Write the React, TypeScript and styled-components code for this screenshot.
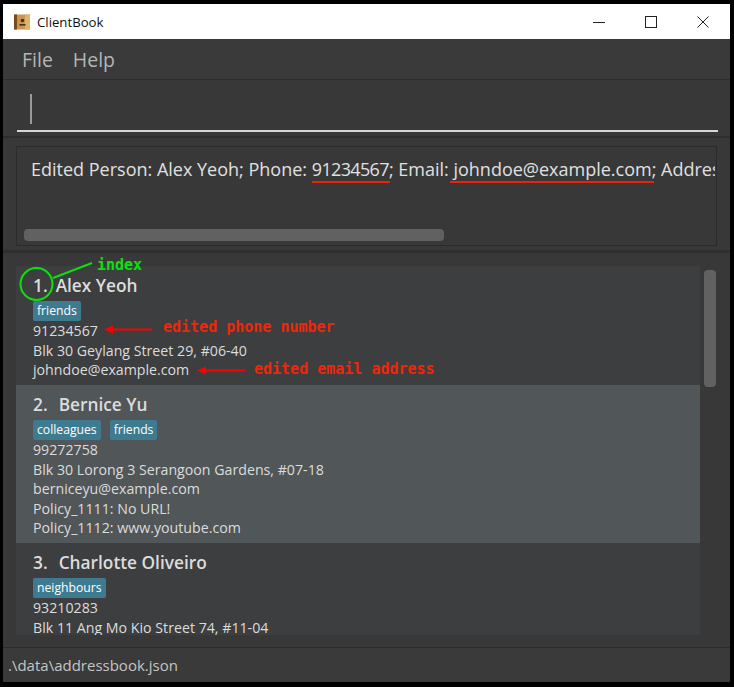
import { createGlobalStyle, styled } from "styled-components";

const GlobalStyle = createGlobalStyle`
  html, body {
    margin: 0;
    padding: 0;
    background: #000;
  }
  * {
    box-sizing: border-box;
  }
`;

const persons = [
  {
    index: 1,
    name: "Alex Yeoh",
    tags: ["friends"],
    lines: ["91234567", "Blk 30 Geylang Street 29, #06-40", "johndoe@example.com"],
  },
  {
    index: 2,
    name: "Bernice Yu",
    tags: ["colleagues", "friends"],
    lines: [
      "99272758",
      "Blk 30 Lorong 3 Serangoon Gardens, #07-18",
      "berniceyu@example.com",
      "Policy_1111: No URL!",
      "Policy_1112: www.youtube.com",
    ],
  },
  {
    index: 3,
    name: "Charlotte Oliveiro",
    tags: ["neighbours"],
    lines: ["93210283", "Blk 11 Ang Mo Kio Street 74, #11-04"],
  },
];

const AppIcon = () => (
  <svg width="16" height="16" viewBox="0 0 16 16">
    <rect x="0" y="0.5" width="16" height="15" fill="#c9954f" />
    <rect x="0" y="0.5" width="3" height="15" fill="#7a4a1e" />
    <rect x="11" y="0.5" width="5" height="15" fill="#e0b36c" />
    <circle cx="8.5" cy="6.5" r="1.8" fill="#4a2f14" />
    <rect x="5.5" y="10" width="6" height="1.6" fill="#4a2f14" />
  </svg>
);

const Annotations = () => (
  <Overlay width="734" height="687" viewBox="0 0 734 687">
    <circle cx="36.5" cy="284" r="16" fill="none" stroke="#0de00d" strokeWidth="2" />
    <line x1="53" y1="278" x2="92" y2="263" stroke="#0de00d" strokeWidth="2" />
    <line x1="112" y1="329.5" x2="152" y2="329.5" stroke="#f00" strokeWidth="2" />
    <polygon points="104,329.5 113,325.5 113,333.5" fill="#f00" />
    <line x1="205" y1="370.5" x2="245" y2="370.5" stroke="#f00" strokeWidth="2" />
    <polygon points="197,370.5 206,366.5 206,374.5" fill="#f00" />
  </Overlay>
);

const App = () => {
  return (
    <Page>
      <GlobalStyle />
      <Window>
        <TitleBar>
          <AppIcon />
          <TitleText>ClientBook</TitleText>
          <WindowButtons>
            <WindowButton>
              <svg width="12" height="12" viewBox="0 0 12 12">
                <line x1="0" y1="6.5" x2="12" y2="6.5" stroke="#222" />
              </svg>
            </WindowButton>
            <WindowButton>
              <svg width="12" height="12" viewBox="0 0 12 12">
                <rect x="0.5" y="0.5" width="11" height="11" fill="none" stroke="#222" />
              </svg>
            </WindowButton>
            <WindowButton>
              <svg width="12" height="12" viewBox="0 0 12 12">
                <path d="M0.5 0.5 L11.5 11.5 M11.5 0.5 L0.5 11.5" stroke="#222" />
              </svg>
            </WindowButton>
          </WindowButtons>
        </TitleBar>

        <MenuBar>
          <MenuItem>File</MenuItem>
          <MenuItem>Help</MenuItem>
        </MenuBar>

        <CommandBar>
          <CommandInput>
            <Caret />
          </CommandInput>
        </CommandBar>

        <ResultPane>
          <ResultBox>
            <ResultText>
              Edited Person: Alex Yeoh; Phone: <PhoneEdit>91234567</PhoneEdit>; Email:{" "}
              <EmailEdit>johndoe@example.com</EmailEdit>; Address: Blk 30 Geylang Street 29, #06-40
            </ResultText>
            <HScrollThumb />
          </ResultBox>
        </ResultPane>

        <ListPane>
          <CardList>
            {persons.map((person) => (
              <Card key={person.index} $alt={person.index % 2 === 0}>
                <CardName>
                  <CardIndex $gap={person.index === 1 ? 8 : 11}>{person.index}.</CardIndex>
                  {person.name}
                </CardName>
                <Tags>
                  {person.tags.map((tag) => (
                    <Tag key={tag}>{tag}</Tag>
                  ))}
                </Tags>
                {person.lines.map((line) => (
                  <CardLine key={line}>{line}</CardLine>
                ))}
              </Card>
            ))}
          </CardList>
          <VScrollThumb />
        </ListPane>

        <StatusBar>.\data\addressbook.json</StatusBar>
      </Window>
      <Annotations />
      <IndexNote>index</IndexNote>
      <PhoneNote>edited phone number</PhoneNote>
      <EmailNote>edited email address</EmailNote>
    </Page>
  );
};

export default App;

const Page = styled.div`
  position: relative;
  width: 734px;
  height: 687px;
  padding: 4px 4px 5px 3px;
  background: #000;
  overflow: hidden;
  font-family: "Open Sans", "Noto Sans", sans-serif;
`;

const Window = styled.div`
  width: 100%;
  height: 100%;
  display: flex;
  flex-direction: column;
  background: #383838;
`;

const TitleBar = styled.div`
  height: 35px;
  flex-shrink: 0;
  display: flex;
  align-items: center;
  padding: 0 1px 0 11px;
  background: #fff;
`;

const TitleText = styled.div`
  margin-left: 7px;
  font-size: 13.2px;
  color: #111;
`;

const WindowButtons = styled.div`
  margin-left: auto;
  display: flex;
`;

const WindowButton = styled.div`
  width: 52px;
  height: 35px;
  display: flex;
  align-items: center;
  justify-content: center;
`;

const MenuBar = styled.div`
  height: 41px;
  flex-shrink: 0;
  display: flex;
  align-items: center;
  gap: 20px;
  padding: 0 0 0 19px;
  background: #3a3a3a;
  border-bottom: 1px solid #2e2e2e;
`;

const MenuItem = styled.div`
  font-size: 19.5px;
  color: #b5b5b5;
`;

const CommandBar = styled.div`
  height: 58px;
  flex-shrink: 0;
  padding: 12px 12px 4px 14px;
  background: #383838;
  border-bottom: 2px solid #2e2e2e;
`;

const CommandInput = styled.div`
  height: 40px;
  padding: 2px 0 0 13px;
  border-bottom: 2px solid #d6d6d6;
`;

const Caret = styled.div`
  width: 2px;
  height: 30px;
  background: #9a9a9a;
`;

const ResultPane = styled.div`
  height: 115px;
  flex-shrink: 0;
  padding: 8px 13px 0 13px;
  background: #383838;
  border-bottom: 3px solid #2e2e2e;
`;

const ResultBox = styled.div`
  position: relative;
  height: 100px;
  padding: 10px 1px 0 14px;
  border: 1px solid #2b2b2b;
`;

const ResultText = styled.div`
  padding-bottom: 6px;
  font-size: 18px;
  line-height: 24px;
  color: #e0e0e0;
  white-space: nowrap;
  overflow: hidden;
`;

const PhoneEdit = styled.span`
  position: relative;
  letter-spacing: -0.65px;

  &::after {
    content: "";
    position: absolute;
    left: 0;
    right: -1px;
    bottom: -2px;
    height: 2px;
    background: #f0200a;
  }
`;

const EmailEdit = styled.span`
  position: relative;

  &::after {
    content: "";
    position: absolute;
    left: -3px;
    right: -2px;
    bottom: -2px;
    height: 2px;
    background: #f0200a;
  }
`;

const HScrollThumb = styled.div`
  position: absolute;
  left: 7px;
  bottom: 4px;
  width: 420px;
  height: 12px;
  border-radius: 4px;
  background: #616161;
`;

const ListPane = styled.div`
  position: relative;
  height: 394px;
  flex-shrink: 0;
  padding: 13px 0 0 13px;
  background: #383838;
  overflow: hidden;
`;

const CardList = styled.div`
  width: 684px;
  height: 369px;
  background: #3c3e3f;
  overflow: hidden;
`;

const Card = styled.div<{ $alt: boolean }>`
  padding: 7px 0 5.5px 17px;
  background: ${(props) => (props.$alt ? "#515658" : "#3c3e3f")};
`;

const CardName = styled.div`
  display: flex;
  font-size: 17.3px;
  font-weight: 600;
  line-height: 26px;
  color: #dcdcdc;
`;

const CardIndex = styled.span<{ $gap: number }>`
  margin-right: ${(props) => props.$gap}px;
`;

const Tags = styled.div`
  display: flex;
  gap: 9px;
  margin-top: 2px;
`;

const Tag = styled.div`
  height: 20px;
  padding: 0 4px;
  border-radius: 2px;
  background: #3e7b91;
  font-size: 12.2px;
  line-height: 19px;
  color: #fff;
`;

const CardLine = styled.div`
  font-size: 14.2px;
  line-height: 19.5px;
  color: #dcdcdc;
`;

const VScrollThumb = styled.div`
  position: absolute;
  top: 17px;
  right: 14px;
  width: 12px;
  height: 117px;
  border-radius: 4px;
  background: #616161;
`;

const StatusBar = styled.div`
  flex: 1;
  display: flex;
  align-items: center;
  padding-left: 5px;
  background: #3a3a3a;
  border-top: 1px solid #2b2b2b;
  font-size: 15px;
  color: #c4c4c4;
`;

const Overlay = styled.svg`
  position: absolute;
  top: 0;
  left: 0;
  pointer-events: none;
`;

const Note = styled.div`
  position: absolute;
  font-family: "DejaVu Sans Mono", monospace;
  font-size: 15px;
  font-weight: 700;
  line-height: 16px;
  color: #f0260a;
  white-space: nowrap;
`;

const IndexNote = styled(Note)`
  left: 97px;
  top: 257px;
  color: #0de00d;
`;

const PhoneNote = styled(Note)`
  left: 163px;
  top: 319px;
`;

const EmailNote = styled(Note)`
  left: 254px;
  top: 361px;
`;
